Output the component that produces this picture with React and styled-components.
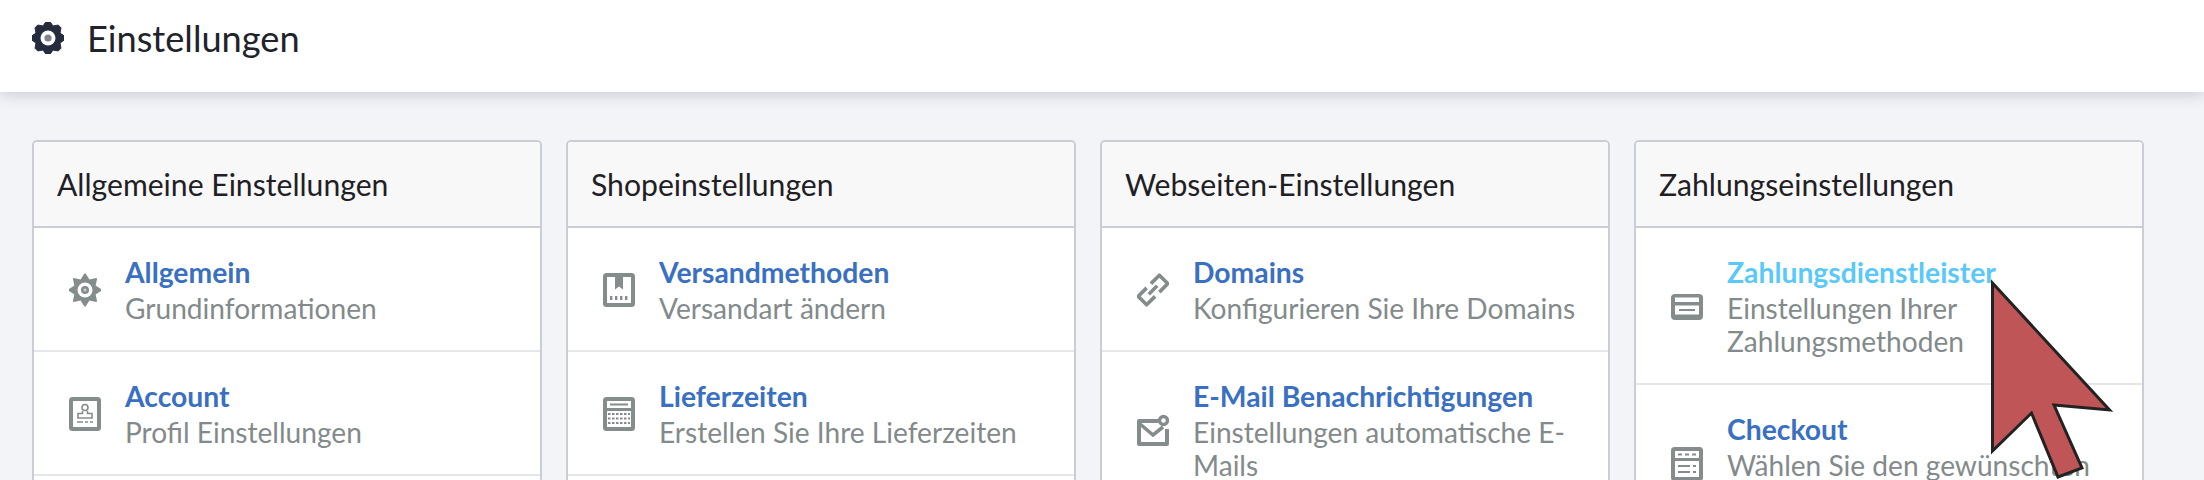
import React from "react";
import styled, { createGlobalStyle } from "styled-components";

const GlobalStyle = createGlobalStyle`
    html, body {
        margin: 0;
        padding: 0;
        background-color: #f2f4f8;
        overflow: hidden;
    }
    * {
        box-sizing: border-box;
    }
`;

const Page = styled.div`
    position: relative;
    width: 2204px;
    height: 480px;
    overflow: hidden;
    background-color: #f2f4f8;
    font-family: Lato, "Liberation Sans", sans-serif;
`;

const TopBar = styled.header`
    height: 92px;
    padding: 0 0 16px 32px;
    display: flex;
    flex-direction: row;
    align-items: center;
    gap: 23px;
    background-color: #fff;
    box-shadow: 0 3px 14px rgba(40, 45, 60, 0.2);
`;

const PageTitle = styled.h1`
    margin: 0;
    font-weight: 400;
    font-size: 36.2px;
    line-height: 40px;
    color: #20232a;
`;

const CardGrid = styled.main`
    display: grid;
    grid-template-columns: repeat(4, 510px);
    gap: 24px;
    padding: 48px 0 0 32px;
`;

const Card = styled.section`
    min-height: 400px;
    background-color: #fff;
    border: 2px solid #c8ced3;
    border-radius: 5px;
`;

const CardHeader = styled.h2`
    margin: 0;
    height: 86px;
    padding: 0 23px;
    display: flex;
    align-items: center;
    font-weight: 400;
    font-size: 30.15px;
    color: #1e2024;
    background-color: #f8f8f9;
    border-bottom: 2px solid #c8ced3;
    border-radius: 3px 3px 0 0;
`;

const Row = styled.div`
    padding: 27px 24px 25px 35px;
    display: flex;
    flex-direction: row;
    align-items: center;
    gap: 24px;
    border-bottom: 2px solid #e4e6e8;

    svg {
        flex: none;
        width: 32px;
        height: 34px;
    }
`;

const RowText = styled.div`
    display: flex;
    flex-direction: column;
    min-width: 0;
`;

const RowTitle = styled.a`
    font-weight: 700;
    font-size: 28.3px;
    line-height: 35px;
    color: ${(props) => (props.$hover ? "#5ac8fa" : "#3a70c1")};
`;

const RowDescription = styled.span`
    font-size: 28.1px;
    line-height: 33px;
    padding-top: 2px;
    color: #838a8b;
`;

const Cursor = styled.svg`
    position: absolute;
    left: 1980px;
    top: 270px;
    width: 150px;
    height: 215px;
`;

const GREY = "#858c8c";

// builds a gear outline out of trapezoid teeth
const gearPath = (cx, cy, outer, inner, teeth, tipWidth = 0.28, baseWidth = 0.55) => {
    const step = (Math.PI * 2) / teeth;
    const pts = [];
    for (let i = 0; i < teeth; i++) {
        const a = i * step - Math.PI / 2;
        pts.push([a - step * baseWidth, inner], [a - step * tipWidth * 0.5, outer], [a + step * tipWidth * 0.5, outer], [a + step * baseWidth, inner]);
    }
    return "M" + pts.map(([a, r]) => `${(cx + Math.cos(a) * r).toFixed(2)} ${(cy + Math.sin(a) * r).toFixed(2)}`).join("L") + "Z";
};

const HeaderGear = () => (
    <svg width="32" height="32" viewBox="0 0 32 32">
        <path d={gearPath(16, 16, 16.5, 13, 8, 0.3, 0.5)} fill="#262c3e" stroke="#262c3e" strokeWidth="1" strokeLinejoin="round" />
        <circle cx="16" cy="16" r="7.5" fill="#fff" />
        <circle cx="16" cy="16" r="3.6" fill="#7f8590" />
    </svg>
);

const GearIcon = () => (
    <svg viewBox="0 0 32 34">
        <path d={gearPath(16, 17, 16.5, 11.5, 8, 0.1, 0.5)} fill={GREY} />
        <circle cx="16" cy="17" r="7.5" fill="#fff" />
        <circle cx="16" cy="17" r="4" fill={GREY} />
        <rect x="14.7" y="15.7" width="2.6" height="2.6" fill="#fff" opacity="0.6" />
    </svg>
);

const Frame = ({ children }) => (
    <svg viewBox="0 0 32 34">
        <rect x="0" y="0" width="32" height="34" rx="3.5" fill={GREY} />
        {children}
    </svg>
);

const AccountIcon = () => (
    <Frame>
        <rect x="4" y="4" width="24" height="26" fill="#fff" />
        <circle cx="16" cy="10.5" r="3" fill="none" stroke={GREY} strokeWidth="1.6" />
        <path d="M13.5 14v2.5H9v4.5h14v-4.5h-4.5V14" fill="none" stroke={GREY} strokeWidth="1.6" />
        <path d="M8 25h6M16 25h3M21 25h3" stroke={GREY} strokeWidth="1.6" />
    </Frame>
);

const BoxIcon = () => (
    <Frame>
        <rect x="4" y="4" width="24" height="26" fill="#fff" />
        <path d="M12 4h8v12.5l-4-3-4 3z" fill={GREY} />
        <path d="M7 25h2.4M12 25h2.4M17 25h2.4M22 25h2.4" stroke={GREY} strokeWidth="4" />
    </Frame>
);

const CalendarIcon = () => (
    <Frame>
        <rect x="4" y="4" width="24" height="7" fill="#fff" />
        <rect x="7" y="6.5" width="18" height="2" fill={GREY} />
        <rect x="4" y="14" width="24" height="16" fill="#fff" />
        <path d="M5 17h22M5 21.5h22M5 26h22" stroke={GREY} strokeWidth="2" strokeDasharray="2.5 1.5" />
    </Frame>
);

const LinkIcon = () => (
    <svg viewBox="0 0 32 34">
        <g transform="rotate(-45 16 17)" fill="none" stroke={GREY} strokeWidth="3.6" strokeLinejoin="round">
            <path d="M13 11H1v12h12" />
            <path d="M19 11h12v12H19" />
            <path d="M10 17h12" />
        </g>
    </svg>
);

const MailIcon = () => (
    <svg viewBox="0 0 32 34">
        <path d="M21 7H2v23h28V15" fill="none" stroke={GREY} strokeWidth="4" strokeLinejoin="round" />
        <path d="M3 10l13 11 10-8" fill="none" stroke={GREY} strokeWidth="3.6" />
        <circle cx="26.5" cy="6.5" r="4" fill="#fff" stroke={GREY} strokeWidth="3.4" />
    </svg>
);

const CardIcon = () => (
    <svg viewBox="0 0 32 34">
        <rect x="0" y="4" width="32" height="26" rx="4" fill={GREY} />
        <rect x="4" y="7.5" width="24" height="4.5" fill="#fff" />
        <rect x="4" y="15.5" width="24" height="9" fill="#fff" />
        <rect x="8" y="19" width="16" height="2" fill={GREY} />
    </svg>
);

const CheckoutIcon = () => (
    <Frame>
        <rect x="4" y="4" width="24" height="7" fill="#fff" />
        <path d="M7 7.5h4M14 7.5h4M21 7.5h4" stroke={GREY} strokeWidth="2" />
        <rect x="4" y="14" width="24" height="16" fill="#fff" />
        <path d="M7 19h12M7 25h12M22 19h3M22 25h3" stroke={GREY} strokeWidth="2" />
    </Frame>
);

const columns = [
    {
        title: "Allgemeine Einstellungen",
        rows: [
            { icon: <GearIcon />, title: "Allgemein", text: "Grundinformationen" },
            { icon: <AccountIcon />, title: "Account", text: "Profil Einstellungen" },
        ],
    },
    {
        title: "Shopeinstellungen",
        rows: [
            { icon: <BoxIcon />, title: "Versandmethoden", text: "Versandart ändern" },
            { icon: <CalendarIcon />, title: "Lieferzeiten", text: "Erstellen Sie Ihre Lieferzeiten" },
        ],
    },
    {
        title: "Webseiten-Einstellungen",
        rows: [
            { icon: <LinkIcon />, title: "Domains", text: "Konfigurieren Sie Ihre Domains" },
            { icon: <MailIcon />, title: "E-Mail Benachrichtigungen", text: "Einstellungen automatische E-Mails" },
        ],
    },
    {
        title: "Zahlungseinstellungen",
        rows: [
            { icon: <CardIcon />, title: "Zahlungsdienstleister", text: "Einstellungen Ihrer Zahlungsmethoden", hover: true },
            { icon: <CheckoutIcon />, title: "Checkout", text: "Wählen Sie den gewünschten Checkout" },
        ],
    },
];

export default function App() {
    return (
        <Page>
            <GlobalStyle />
            <TopBar>
                <HeaderGear />
                <PageTitle>Einstellungen</PageTitle>
            </TopBar>
            <CardGrid>
                {columns.map((col) => (
                    <Card key={col.title}>
                        <CardHeader>{col.title}</CardHeader>
                        {col.rows.map((row) => (
                            <Row key={row.title}>
                                {row.icon}
                                <RowText>
                                    <RowTitle $hover={row.hover}>{row.title}</RowTitle>
                                    <RowDescription>{row.text}</RowDescription>
                                </RowText>
                            </Row>
                        ))}
                    </Card>
                ))}
            </CardGrid>
            <Cursor viewBox="1980 270 150 215">
                <path
                    d="M1992.5 283L2109.5 410L2054 405L2082 468L2058 477L2031.5 413L1992.5 451Z"
                    fill="#c05558"
                    stroke="#222"
                    strokeWidth="3"
                />
            </Cursor>
        </Page>
    );
}
